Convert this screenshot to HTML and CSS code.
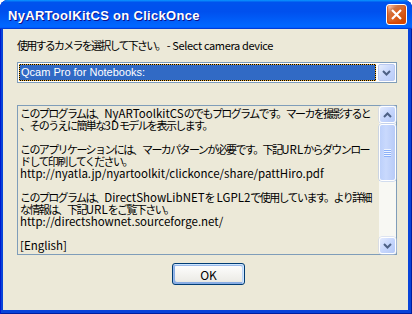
FILE: index.html
```html
<!DOCTYPE html>
<html lang="ja">
<head>
  <meta charset="UTF-8" />
  <meta name="viewport" content="width=device-width, initial-scale=1.0"/>
  <title>NyARToolKitCS on ClickOnce</title>
  <link rel="stylesheet" href="styles.css">
</head>
<body>

  <div class="window">
    <div class="titlebar">
      <span class="title">NyARToolKitCS on ClickOnce</span>
      <button class="close" aria-label="Close">
        <svg width="19" height="19" viewBox="0 0 19 19"><path d="M5 5 L14 14 M14 5 L5 14" stroke="#fff" stroke-width="2.2" fill="none"/></svg>
      </button>
    </div>

    <div class="client">
      <p class="prompt">使用するカメラを選択して下さい。<span class="lat"> - Select camera device</span></p>

      <div class="combo">
        <div class="combo-value">Qcam Pro for Notebooks:</div>
        <div class="combo-btn">
          <svg width="9" height="6" viewBox="0 0 9 6"><path d="M1 1 L4.5 4.5 L8 1" stroke="#4d6185" stroke-width="2" fill="none"/></svg>
        </div>
      </div>

      <div class="memo">
        <div class="memo-text">このプログラムは、<span class="lat">NyARToolkitCS</span>のでもプログラムです。マーカを撮影すると
、そのうえに簡単な<span class="lat">3D</span>モデルを表示します。

このアプリケーションには、マーカパターンが必要です。下記<span class="lat">URL</span>からダウンロー
ドして印刷してください。
<span class="lat">http://nyatla.jp/nyartoolkit/clickonce/share/pattHiro.pdf</span>

このプログラムは、<span class="lat">DirectShowLibNET</span>を<span class="lat"> LGPL2</span>で使用しています。より詳細
な情報は、下記<span class="lat">URL</span>をご覧下さい。
<span class="lat">http://directshownet.sourceforge.net/</span>

<span class="lat">[English]</span></div>
        <div class="vscroll">
          <div class="sb-btn">
            <svg width="9" height="6" viewBox="0 0 9 6"><path d="M1 5 L4.5 1.5 L8 5" stroke="#4d6185" stroke-width="2" fill="none"/></svg>
          </div>
          <div class="sb-thumb"><span class="grip"></span></div>
          <div class="sb-track"></div>
          <div class="sb-btn">
            <svg width="9" height="6" viewBox="0 0 9 6"><path d="M1 1 L4.5 4.5 L8 1" stroke="#4d6185" stroke-width="2" fill="none"/></svg>
          </div>
        </div>
      </div>

      <div class="actions">
        <button class="ok">OK</button>
      </div>
    </div>
  </div>

</body>
</html>
```

FILE: styles.css
```css
body { margin: 0; font-family: "Noto Sans CJK JP", sans-serif; font-size: 12px; background: #fff; }

.window { width: 412px; height: 314px; display: flex; flex-direction: column; background: #0843d9; border-radius: 8px 8px 0 0; overflow: hidden; box-shadow: inset 1px 0 #0019cf, inset -1px 0 #001ea0, inset 0 -1px #001ea0; }

.titlebar { height: 29px; flex: none; display: flex; align-items: center; padding: 0 5px 0 8px; background: linear-gradient(180deg, #0997ff, #0053ee 8%, #0050ee 40%, #0066ff 88%, #0066ff 93%, #005bff 95%, #003dd7 96%, #003dd7); }
.title { flex: 1; color: #fff; font: bold 13px "Liberation Sans", sans-serif; letter-spacing: 0.3px; text-shadow: 1px 1px #0f1089; padding-top: 1px; }
.close { width: 21px; height: 21px; padding: 0; display: flex; align-items: center; justify-content: center; border: 1px solid #fff; border-radius: 3px; background: radial-gradient(circle at 90% 90%, #cc4600 0, #dc6527 55%, #cd7546 70%, #ffccb2 90%, #fff 100%); box-shadow: inset 0 -1px 2px 1px #da4600; }

.client { flex: 1; margin: 0 4px 4px 3px; background: #ece9d8; padding: 9px 11px 0 14px; }

.prompt { margin: 0; font-size: 11px; line-height: 14px; color: #000; letter-spacing: -1.75px; }
.prompt .lat { font-size: 11px; letter-spacing: -0.35px; }

.combo { margin-top: 10px; height: 21px; box-sizing: border-box; border: 1px solid #7f9db9; background: #fff; padding: 1px; display: flex; gap: 2px; }
.combo-value { flex: 1; box-sizing: border-box; border: 1px solid transparent; background: linear-gradient(#316ac5, #316ac5) padding-box, repeating-conic-gradient(#000 0 25%, #f0b030 0 50%) 0 0 / 2px 2px border-box; color: #fff; font: 11px "Liberation Sans", sans-serif; line-height: 15px; padding-left: 1px; }
.combo-btn { width: 17px; flex: none; display: flex; align-items: center; justify-content: center; box-sizing: border-box; border: 1px solid #bac9f1; border-radius: 2px; background: linear-gradient(135deg, #e6eefc, #c8d7fc 50%, #b9cdf9); }

.memo { margin-top: 22px; height: 150px; box-sizing: border-box; border: 1px solid #7f9db9; display: flex; }
.memo-text { flex: 1; padding: 1px 0 0 2px; white-space: pre; overflow: hidden; font-size: 11px; line-height: 12px; color: #000; letter-spacing: -1.6px; }
.memo-text .lat { font-size: 11.5px; line-height: 11px; letter-spacing: 0; }

.vscroll { width: 17px; flex: none; display: flex; flex-direction: column; background: #f8f8f3; }
.sb-btn { height: 17px; flex: none; display: flex; align-items: center; justify-content: center; box-sizing: border-box; border: 1px solid #fff; border-radius: 3px; background: linear-gradient(135deg, #e3ebfe, #c6d6fc 50%, #b5c9f7); box-shadow: 0 0 0 0.5px #c3d0ee; }
.sb-thumb { height: 57px; flex: none; margin-top: 1px; display: flex; align-items: center; justify-content: center; box-sizing: border-box; border: 1px solid #fff; border-radius: 3px; background: linear-gradient(90deg, #bcd0fb, #c9d9fd 40%, #b8cbf7); box-shadow: 0 0 0 0.5px #a9bfea; }
.grip { width: 7px; height: 8px; background: repeating-linear-gradient(180deg, #eef4fe 0 1px, #8cb0f8 1px 2px); }
.sb-track { flex: 1; }

.actions { margin-top: 8px; display: flex; justify-content: center; padding-left: 3px; }
.ok { width: 73px; height: 22px; box-sizing: border-box; border: 1px solid #003c74; border-radius: 3px; background: linear-gradient(180deg, #fff, #ecebe6 86%, #d6d0c5); box-shadow: inset -1px 1px #cee7ff, inset 1px 2px #98b8ea, inset -2px 2px #bcd4f6, inset 1px -1px #89ade4, inset 2px -2px #89ade4; font-family: "Noto Sans CJK JP", sans-serif; font-size: 12px; color: #000; padding: 0; }
```
